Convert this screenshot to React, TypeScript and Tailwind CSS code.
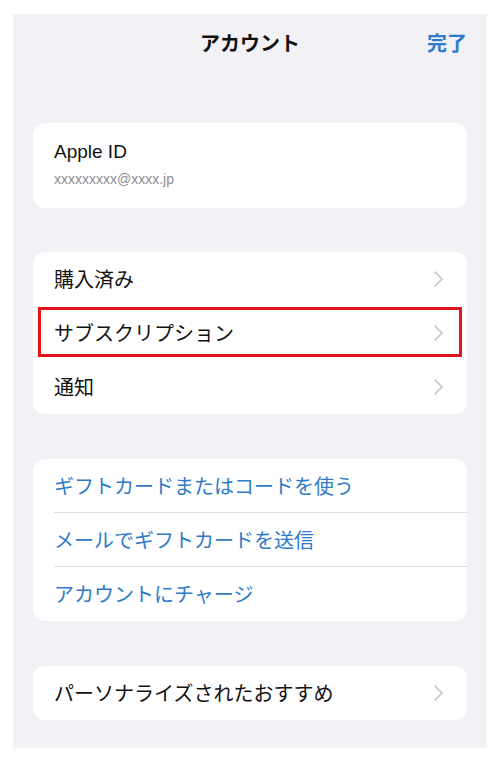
const jp = "font-['Noto_Sans_CJK_JP','Noto_Sans',sans-serif]";

const Chevron = () => (
  <svg width="11" height="18" viewBox="0 0 11 18" fill="none" className="shrink-0">
    <polyline
      points="2,2 9,9 2,16"
      stroke="#c4c4c8"
      strokeWidth="1.6"
      strokeLinecap="round"
      strokeLinejoin="round"
    />
  </svg>
);

interface RowProps {
  label: string;
  highlighted?: boolean;
}

const NavRow = ({ label, highlighted }: RowProps) => (
  <div className="relative flex h-[54px] items-center justify-between pl-[21px] pr-[23px]">
    <span className="text-[20px] text-[#111]">{label}</span>
    <Chevron />
    {highlighted && (
      <div className="absolute left-[5px] right-[5px] top-[1px] bottom-[3px] border-[3px] border-[#e0141e]" />
    )}
  </div>
);

const LinkRow = ({ label, last }: { label: string; last?: boolean }) => (
  <div className="pl-[21px]">
    <div
      className={`flex h-[54px] items-center ${last ? "" : "border-b border-[#dcdce0]"}`}
    >
      <span className="text-[20px] text-[#2f7bc8]">{label}</span>
    </div>
  </div>
);

export default function App() {
  return (
    <div className={`w-[502px] h-[765px] bg-white pt-[14px] pl-[13px] pr-[15px] ${jp}`}>
      <div className="h-[734px] bg-[#f2f1f6] px-[20px]">
        {/* Header */}
        <div className="relative flex h-[58px] items-center justify-center">
          <span className="text-[20px] font-bold text-[#111]">アカウント</span>
          <span className="absolute right-[0px] text-[20px] font-bold text-[#2f7bc8]">
            完了
          </span>
        </div>

        {/* Apple ID */}
        <div className="mt-[51px] flex h-[85px] flex-col justify-center rounded-[12px] bg-white pl-[21px] pb-[3px]">
          <span className="text-[19px] leading-[24px] text-[#111] font-['Liberation_Sans',sans-serif]">
            Apple ID
          </span>
          <span className="mt-[5px] text-[14px] leading-[20px] text-[#8e8e93] font-['Liberation_Sans',sans-serif]">
            xxxxxxxxx@xxxx.jp
          </span>
        </div>

        {/* Purchases */}
        <div className="mt-[44px] rounded-[12px] bg-white">
          <NavRow label="購入済み" />
          <NavRow label="サブスクリプション" highlighted />
          <NavRow label="通知" />
        </div>

        {/* Gift cards */}
        <div className="mt-[45px] rounded-[12px] bg-white">
          <LinkRow label="ギフトカードまたはコードを使う" />
          <LinkRow label="メールでギフトカードを送信" />
          <LinkRow label="アカウントにチャージ" last />
        </div>

        {/* Recommendations */}
        <div className="mt-[45px] rounded-[12px] bg-white">
          <NavRow label="パーソナライズされたおすすめ" />
        </div>
      </div>
    </div>
  );
}
